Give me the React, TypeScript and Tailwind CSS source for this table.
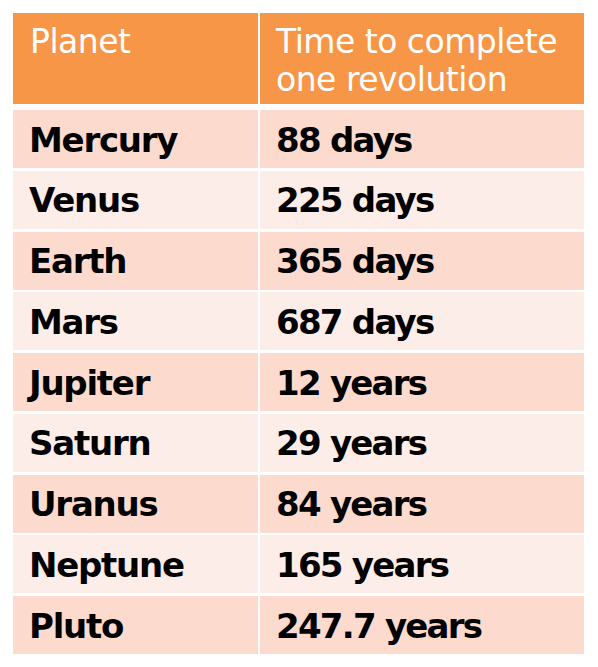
import React from "react";

const rows: [string, string][] = [
  ["Mercury", "88 days"],
  ["Venus", "225 days"],
  ["Earth", "365 days"],
  ["Mars", "687 days"],
  ["Jupiter", "12 years"],
  ["Saturn", "29 years"],
  ["Uranus", "84 years"],
  ["Neptune", "165 years"],
  ["Pluto", "247.7 years"],
];

export default function App() {
  return (
    <div
      className="w-[598px] h-[667px] bg-white pt-[13px] pl-[13px]"
      style={{ fontFamily: '"DejaVu Sans", sans-serif' }}
    >
      <div className="w-[571px] grid grid-cols-[244.5px_324px] gap-x-[2.5px]">
        <div className="h-[91px] bg-[#f79646] text-white text-[33px] leading-[38px] tracking-[-0.5px] pl-[17px] pt-[10px]">
          Planet
        </div>
        <div className="h-[91px] bg-[#f79646] text-white text-[33px] leading-[38px] tracking-[-0.5px] pl-[16px] pt-[10px]">
          Time to complete
          <br />
          one revolution
        </div>
        <div className="col-span-2 h-[6px]" />
        {rows.map(([p, t], i) => (
          <React.Fragment key={p}>
            <div
              className={`h-[58px] flex items-center pl-[16px] pt-[2px] text-[34px] font-bold text-black tracking-[-1.25px] ${
                i % 2 === 0 ? "bg-[#fcdacd]" : "bg-[#fdede9]"
              }`}
            >
              {p}
            </div>
            <div
              className={`h-[58px] flex items-center pl-[16px] pt-[2px] text-[34px] font-bold text-black tracking-[-1.75px] ${
                i % 2 === 0 ? "bg-[#fcdacd]" : "bg-[#fdede9]"
              }`}
            >
              {t}
            </div>
            {i < rows.length - 1 && <div className="col-span-2 h-[2.75px]" />}
          </React.Fragment>
        ))}
      </div>
    </div>
  );
}
